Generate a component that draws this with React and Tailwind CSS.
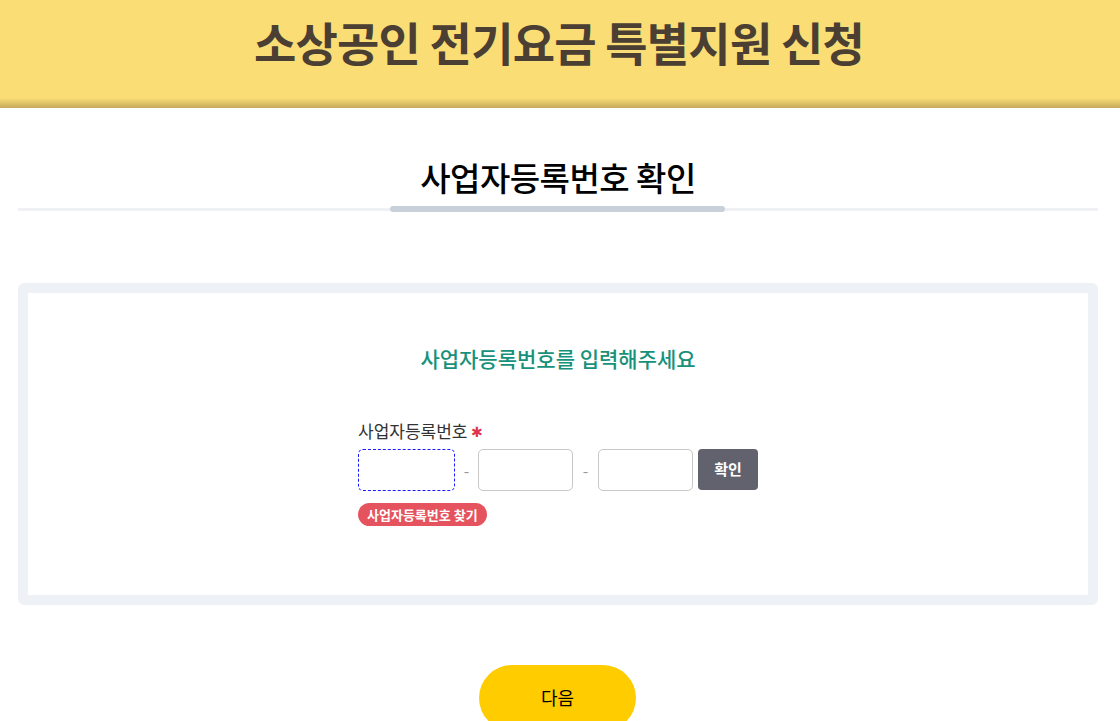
export default function App() {
  const font = { fontFamily: '"Noto Sans CJK KR", "Noto Sans", sans-serif' };
  return (
    <div className="min-h-screen bg-white" style={font}>
      <header className="relative h-[108px] bg-[#fadd75]">
        <div className="flex h-[100px] items-center justify-center pb-[18px] pr-[2px]">
          <h1 className="text-[46px] font-semibold tracking-[-0.8px] text-[#4b3f33]">소상공인 전기요금 특별지원 신청</h1>
        </div>
        <div className="absolute bottom-0 left-0 right-0 h-[10px] bg-gradient-to-b from-[#fadd75] to-[#c6aa5c]" />
      </header>

      <section className="ml-[18px] mr-[22px] pt-[45px]">
        <h2 className="text-center text-[33px] font-medium leading-[48px] tracking-[-0.5px] text-black">사업자등록번호 확인</h2>
        <div className="relative mt-[5px] h-[6px]">
          <div className="absolute left-0 right-0 top-[2px] h-[3px] bg-[#eff1f4]" />
          <div className="absolute left-[372px] top-0 h-[6px] w-[335px] rounded-full bg-[#c8d0da]" />
        </div>
      </section>

      <section className="ml-[18px] mr-[22px] mt-[71px] rounded-[6px] border-[10px] border-[#eef1f5] pb-[69px] pt-[50px]">
        <p className="text-center text-[21px] font-medium text-[#17917a]">사업자등록번호를 입력해주세요</p>
        <div className="ml-[330px] mt-[44px]">
          <div className="flex items-center text-[17px] leading-[24px] text-[#333]">
            사업자등록번호<span className="ml-[4px] text-[14px] text-[#e0334d]">✱</span>
          </div>
          <div className="mt-[6px] flex items-center">
            <input className="h-[42px] w-[97px] rounded-[5px] border border-dashed border-[#1a1aff] outline-none" />
            <span className="w-[23px] text-center text-[#999]">-</span>
            <input className="h-[42px] w-[95px] rounded-[5px] border border-[#c8c8c8] outline-none" />
            <span className="w-[25px] text-center text-[#999]">-</span>
            <input className="h-[42px] w-[95px] rounded-[5px] border border-[#c8c8c8] outline-none" />
            <button className="ml-[5px] h-[41px] w-[60px] rounded-[4px] bg-[#62626e] text-[15px] font-bold text-white">확인</button>
          </div>
          <div className="mt-[10px]">
            <span className="inline-flex h-[23px] items-center rounded-full bg-[#e5535e] px-[9px] text-[13px] font-bold text-white">사업자등록번호 찾기</span>
          </div>
        </div>
      </section>

      <div className="mt-[60px] flex justify-center pb-[20px]">
        <button className="ml-[-5px] h-[66px] w-[157px] rounded-full bg-[#ffcc00] text-[18px] text-black">다음</button>
      </div>
    </div>
  );
}
